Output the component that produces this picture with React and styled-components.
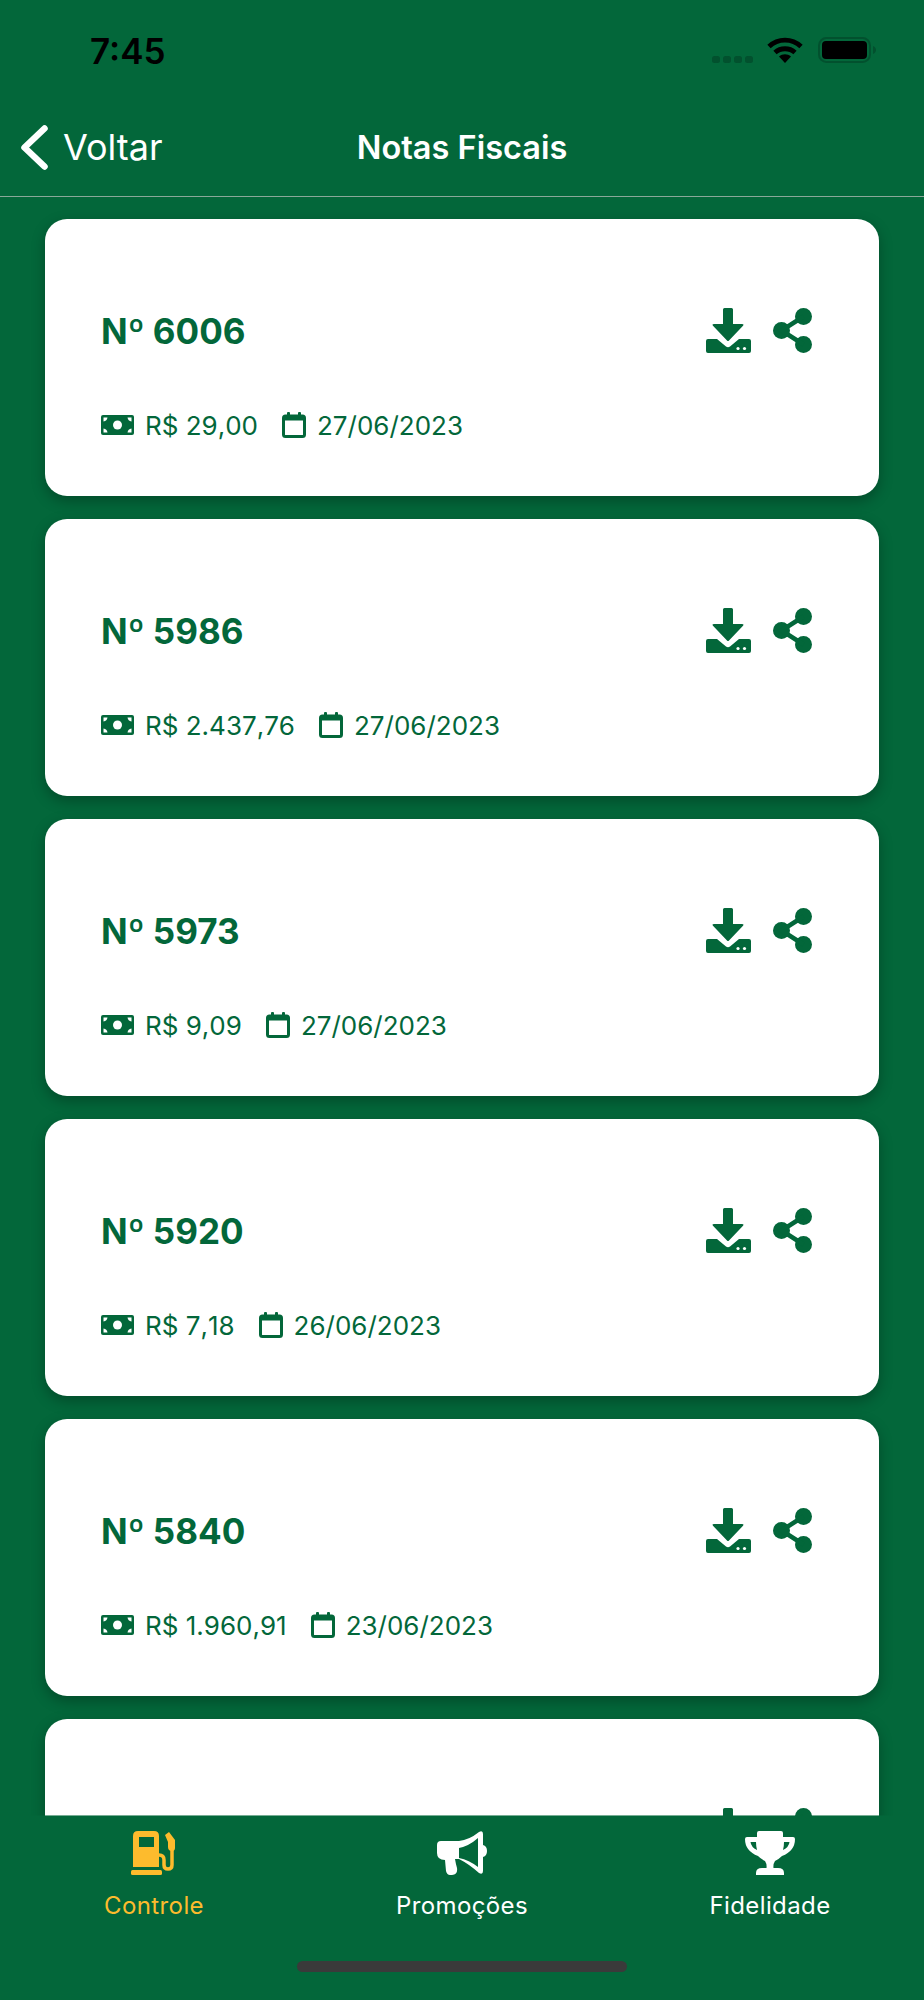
import React from 'react';
import styled, { createGlobalStyle } from 'styled-components';

const GREEN = '#03673a';
const YELLOW = '#fdbb2d';

const GlobalStyle = createGlobalStyle`
  html, body {
    margin: 0;
    padding: 0;
    background: ${GREEN};
  }
  * {
    box-sizing: border-box;
  }
`;

const Screen = styled.div`
  width: 924px;
  height: 2000px;
  display: flex;
  flex-direction: column;
  background: ${GREEN};
  font-family: Inter, "Liberation Sans", sans-serif;
  overflow: hidden;
`;

const StatusBar = styled.div`
  height: 90px;
  flex: none;
  display: flex;
  align-items: flex-start;
  justify-content: space-between;
  padding: 37px 47px 0 90px;
`;

const Clock = styled.span`
  font-size: 35px;
  line-height: 28px;
  font-weight: 600;
  color: #000;
`;

const StatusIcons = styled.div`
  display: flex;
  align-items: flex-start;
  svg {
    display: block;
  }
`;

const NavBar = styled.div`
  height: 107px;
  flex: none;
  display: grid;
  grid-template-columns: 1fr auto 1fr;
  align-items: center;
  padding: 8px 21px 0;
  border-bottom: 1px solid #8aa899;
`;

const BackLink = styled.div`
  display: flex;
  align-items: center;
  gap: 15px;
  color: #fff;
  font-size: 36px;
`;

const NavTitle = styled.div`
  color: #fff;
  font-size: 32.5px;
  font-weight: 600;
`;

const List = styled.div`
  flex: 1;
  min-height: 0;
  overflow: hidden;
  display: flex;
  flex-direction: column;
  gap: 23px;
  padding: 22px 45px 0;
`;

const Card = styled.div`
  flex: none;
  height: 277px;
  background: #fff;
  border-radius: 22px;
  box-shadow: 0 5px 14px rgba(0, 0, 0, 0.28);
  padding: 89px 67px 0 56px;
  display: flex;
  flex-direction: column;
`;

const CardTop = styled.div`
  height: 45px;
  display: flex;
  align-items: center;
  justify-content: space-between;
`;

const Number = styled.div`
  color: ${GREEN};
  font-size: 35px;
  font-weight: 700;
`;

const Actions = styled.div`
  display: flex;
  gap: 22px;
  margin-left: auto;
  svg {
    display: block;
  }
`;

const Meta = styled.div`
  margin-top: 59px;
  height: 26px;
  display: flex;
  align-items: center;
  color: ${GREEN};
  font-size: 26px;
  font-kerning: none;
`;

const MetaItem = styled.div`
  display: flex;
  align-items: center;
  gap: 11px;
  margin-right: 24px;
  svg {
    display: block;
    flex: none;
  }
`;

const TabBar = styled.div`
  height: 185px;
  margin-top: -1px;
  flex: none;
  position: relative;
  z-index: 1;
  background: ${GREEN};
  background-clip: padding-box;
  border-top: 1px solid rgba(3, 103, 58, 0.55);
  display: flex;
  flex-direction: column;
`;

const Tabs = styled.div`
  display: grid;
  grid-template-columns: repeat(3, 1fr);
  padding-top: 15px;
`;

const Tab = styled.div`
  display: flex;
  flex-direction: column;
  align-items: center;
  color: ${(props) => (props.$active ? YELLOW : '#fff')};
  font-size: 24px;
  svg {
    display: block;
  }
`;

const TabLabel = styled.span`
  margin-top: 16px;
  line-height: 30px;
  letter-spacing: 0.4px;
`;

const HomeIndicator = styled.div`
  width: 330px;
  height: 11px;
  margin: 40px auto 0;
  border-radius: 6px;
  background: #3a3a3a;
`;

const Signal = () => (
  <svg width="55" height="26" viewBox="0 0 55 26" fill="#02512e">
    <rect x="0" y="19" width="8" height="7" rx="2.5" />
    <rect x="11" y="19" width="8" height="7" rx="2.5" />
    <rect x="22" y="19" width="8" height="7" rx="2.5" />
    <rect x="33" y="19" width="8" height="7" rx="2.5" />
  </svg>
);

const Wifi = () => (
  <svg width="36" height="26" viewBox="0 0 36 26" fill="none" stroke="#000" strokeWidth="4.8">
    <path d="M2 9.5C11 1 25 1 34 9.5" />
    <path d="M8 15.5C13.5 10.5 22.5 10.5 28 15.5" />
    <path d="M18 26l-6-6.5c3.5-3 8.5-3 12 0z" fill="#000" stroke="none" />
  </svg>
);

const Battery = () => (
  <svg width="59" height="26" viewBox="0 0 59 26" style={{ marginLeft: 15 }}>
    <rect x="1" y="1" width="51" height="24" rx="7.5" fill="none" stroke="#02512e" strokeWidth="2" />
    <rect x="4" y="4" width="45" height="18" rx="4" fill="#000" />
    <path d="M55 9c2 .8 3 2.300 3 4s-1 3.200-3 4z" fill="#02512e" />
  </svg>
);

const BackChevron = () => (
  <svg width="27" height="45" viewBox="0 0 27 45" fill="none" stroke="#fff" strokeWidth="6.5" strokeLinecap="round" strokeLinejoin="round">
    <path d="M23.500 3.500L3.500 22.500L23.500 41.500" />
  </svg>
);

const DownloadIcon = () => (
  <svg width="45" height="45" viewBox="0 0 45 45" fill={GREEN}>
    <path d="M17 1.500Q17 0 18.500 0H25.500Q27 0 27 1.500V16H36Q38.500 16 36.800 18L23 32.500Q22 33.500 21 32.500L7.200 18Q5.500 16 8 16H17Z" />
    <path d="M2 31H11L20 38.500Q22 40 24 38.500L33 31H43Q45 31 45 33V43Q45 45 43 45H2Q0 45 0 43V33Q0 31 2 31Z" />
    <circle cx="32" cy="40.500" r="1.600" fill="#fff" />
    <circle cx="38.500" cy="40.500" r="1.600" fill="#fff" />
  </svg>
);

const ShareIcon = () => (
  <svg width="39" height="45" viewBox="0 0 39 45" fill={GREEN}>
    <circle cx="30.500" cy="8.500" r="8.500" />
    <circle cx="8.500" cy="22.500" r="8.500" />
    <circle cx="30.500" cy="36.500" r="8.500" />
    <path d="M30.500 8.500L8.500 22.500L30.500 36.500" fill="none" stroke={GREEN} strokeWidth="4.500" />
  </svg>
);

const MoneyIcon = () => (
  <svg width="33" height="20" viewBox="0 0 33 20">
    <rect width="33" height="20" rx="2" fill={GREEN} />
    <circle cx="16.500" cy="10" r="4.500" fill="#fff" />
    <path d="M2.500 6.500V2.500H6.500Q6 6 2.500 6.500ZM30.500 6.500V2.500H26.500Q27 6 30.500 6.500ZM2.500 13.500V17.500H6.500Q6 14 2.500 13.500ZM30.500 13.500V17.500H26.500Q27 14 30.500 13.500Z" fill="#fff" />
  </svg>
);

const CalendarIcon = () => (
  <svg width="24" height="26" viewBox="0 0 24 26" fill={GREEN}>
    <rect x="1.500" y="4" width="21" height="20.500" rx="2" fill="none" stroke={GREEN} strokeWidth="3" />
    <rect x="1.500" y="4" width="21" height="4.500" />
    <rect x="5" y="0" width="3" height="6" rx="1" />
    <rect x="16" y="0" width="3" height="6" rx="1" />
  </svg>
);

const PumpIcon = () => (
  <svg width="46" height="44" viewBox="0 0 46 44" fill={YELLOW}>
    <path
      fillRule="evenodd"
      d="M7 0H23Q28 0 28 5V36H2V5Q2 0 7 0ZM8 6V16H23V6Z"
    />
    <rect x="0" y="39" width="31" height="5" rx="1.500" />
    <path d="M28 24Q33 24 33 29V34Q33 38 37 38Q41 38 41 34V16" fill="none" stroke={YELLOW} strokeWidth="3.500" />
    <path d="M34 4L38 1L44 9V17Q44 20 41 20Q37 20 37 16V11Z" />
  </svg>
);

const MegaphoneIcon = () => (
  <svg width="50" height="44" viewBox="0 0 50 44" fill="#fff">
    <path
      fillRule="evenodd"
      d="M4 10H22Q32 9 42 1Q46 -1 46 3V14Q50 15 50 20Q50 25 46 26V40Q46 44 42 42Q32 33 22 28H18Q19 34 20 37Q21 44 15 44H13Q10 44 9 40L8 29Q0 29 0 22V14Q0 10 4 10ZM22 17V27Q32 29 41 36V7Q32 15 22 17Z"
    />
  </svg>
);

const TrophyIcon = () => (
  <svg width="50" height="44" viewBox="0 0 50 44" fill="#fff">
    <path
      fillRule="evenodd"
      d="M14 0H36Q38 0 38 2V6H48Q50 6 50 8Q50 20 37 25Q34 28 30 30Q28 33 28.500 37H33Q39 37 39 42V44H11V42Q11 37 17 37H21.500Q22 33 20 30Q16 28 13 25Q0 20 0 8Q0 6 2 6H12V2Q12 0 14 0ZM5.500 11Q6 16 12 19Q11 15 11 11ZM44.500 11H39Q39 15 38 19Q44 16 44.500 11Z"
    />
  </svg>
);

const invoices = [
  { number: '6006', value: '29,00', date: '27/06/2023' },
  { number: '5986', value: '2.437,76', date: '27/06/2023' },
  { number: '5973', value: '9,09', date: '27/06/2023' },
  { number: '5920', value: '7,18', date: '26/06/2023' },
  { number: '5840', value: '1.960,91', date: '23/06/2023' },
];

const tabs = [
  { label: 'Controle', icon: <PumpIcon />, active: true },
  { label: 'Promoções', icon: <MegaphoneIcon /> },
  { label: 'Fidelidade', icon: <TrophyIcon /> },
];

const CardActions = () => (
  <Actions>
    <DownloadIcon />
    <ShareIcon />
  </Actions>
);

export default function App() {
  return (
    <Screen>
      <GlobalStyle />
      <StatusBar>
        <Clock>7:45</Clock>
        <StatusIcons>
          <Signal />
          <Wifi />
          <Battery />
        </StatusIcons>
      </StatusBar>
      <NavBar>
        <BackLink>
          <BackChevron />
          Voltar
        </BackLink>
        <NavTitle>Notas Fiscais</NavTitle>
      </NavBar>
      <List>
        {invoices.map((invoice) => (
          <Card key={invoice.number}>
            <CardTop>
              <Number>Nº {invoice.number}</Number>
              <CardActions />
            </CardTop>
            <Meta>
              <MetaItem>
                <MoneyIcon />
                R$ {invoice.value}
              </MetaItem>
              <MetaItem>
                <CalendarIcon />
                {invoice.date}
              </MetaItem>
            </Meta>
          </Card>
        ))}
        {/* next card is cut off by the tab bar, only its icons peek out */}
        <Card>
          <CardTop>
            <CardActions />
          </CardTop>
        </Card>
      </List>
      <TabBar>
        <Tabs>
          {tabs.map((tab) => (
            <Tab key={tab.label} $active={tab.active}>
              {tab.icon}
              <TabLabel>{tab.label}</TabLabel>
            </Tab>
          ))}
        </Tabs>
        <HomeIndicator />
      </TabBar>
    </Screen>
  );
}
